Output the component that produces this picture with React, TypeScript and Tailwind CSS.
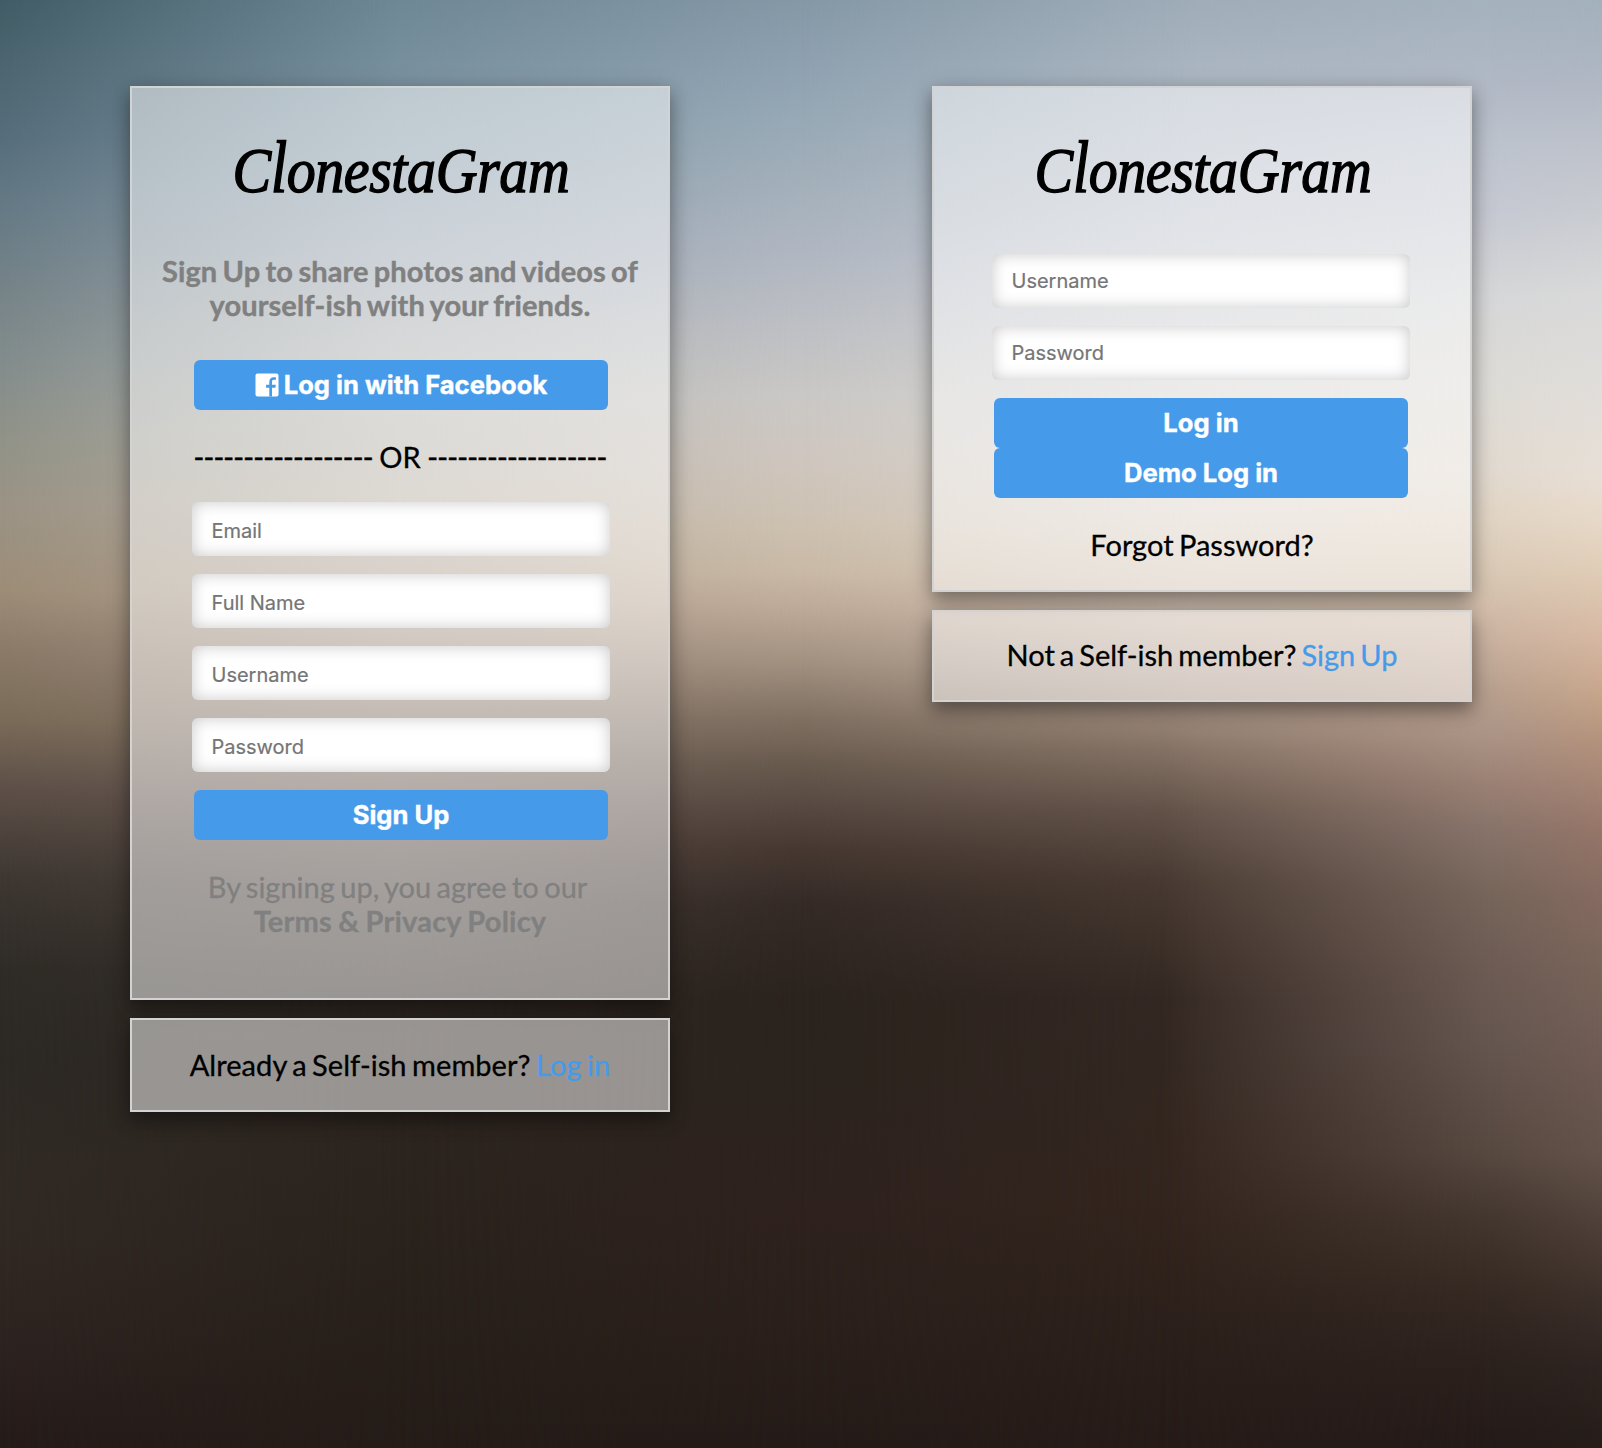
import type { ReactNode } from 'react';

function Backdrop() {
  return (
    <div className="absolute inset-0">
      <div className="absolute inset-0 bg-[linear-gradient(to_bottom,#415c66_0px,#4c6570_65px,#566e7b_138px,#647985_203px,#738288_277px,#848d8c_369px,#929388_443px,#9b9385_508px,#9d8d77_591px,#8d7b6a_646px,#7a6b58_720px,#5f5149_785px,#3e3732_877px,#2f2c27_970px,#2c2924_1062px,#302a25_1154px,#312823_1247px,#2d2320_1339px,#251b19_1448px)]" />
      <div className="absolute inset-0 bg-[linear-gradient(to_bottom,#6f8896_0px,#7b93a1_90px,#8b9dac_180px,#99a5b1_250px,#abafb2_330px,#b7b7b3_400px,#bab1a5_500px,#b09f90_600px,#8e7b6d_700px,#62534b_800px,#443a34_900px,#2f2722_1000px,#2b231d_1200px,#251c18_1448px)] [mask-image:linear-gradient(to_right,transparent_0px,black_400px)]" />
      <div className="absolute inset-0 bg-[linear-gradient(to_bottom,#8598a6_0px,#8fa1b0_65px,#97a9b6_120px,#a3b0ba_185px,#afb6c1_249px,#bdbfc4_323px,#cac8c5_397px,#cfc6be_462px,#cdc1b1_526px,#c9b9a5_572px,#bda997_610px,#a08f7f_665px,#7f6f61_720px,#67594d_766px,#594a43_803px,#463831_850px,#342a26_905px,#2b231d_997px,#2c231e_1108px,#2f221e_1200px,#2b201b_1320px,#241b18_1448px)] [mask-image:linear-gradient(to_right,transparent_400px,black_800px)]" />
      <div className="absolute inset-0 bg-[linear-gradient(to_bottom,#9fadb9_0px,#adb8c3_90px,#bbc1cc_180px,#c5c9d2_250px,#d3d3d5_340px,#dddad5_440px,#dfd5ca_520px,#d5c4b6_590px,#c1afa1_640px,#a79385_700px,#857365_750px,#635349_810px,#493b33_880px,#342823_1000px,#33251e_1200px,#261b18_1448px)] [mask-image:linear-gradient(to_right,transparent_800px,black_1200px)]" />
      <div className="absolute inset-0 bg-[linear-gradient(to_bottom,#a4b2bd_0px,#b0b8c4_80px,#bcc2cd_138px,#c6c9d2_212px,#d6d7d8_295px,#dedcd7_388px,#e2dad0_471px,#e1d4c3_520px,#dac9b5_572px,#cbb3a1_637px,#b8a08f_692px,#aa9285_739px,#9a8074_785px,#87736a_831px,#76655a_896px,#6d5b54_970px,#655650_1043px,#574840_1154px,#43372f_1219px,#362923_1293px,#2b211d_1366px,#241a18_1448px)] [mask-image:linear-gradient(to_right,transparent_1160px,black_1490px)]" />
      <div className="absolute inset-0 bg-[linear-gradient(to_bottom,#a3b1bc_0px,#adb5c2_65px,#bcc1ca_138px,#c9cbd1_212px,#d9d9d9_295px,#e0ddd9_388px,#e7dfd6_471px,#e7d9c9_517px,#dfccb6_572px,#d6b8a2_637px,#c7a68b_692px,#b4937c_739px,#a48474_785px,#957568_831px,#856a60_896px,#786459_970px,#705c54_1043px,#63524a_1154px,#50423a_1219px,#3d302a_1293px,#2e2421_1366px,#251d19_1448px)] [mask-image:linear-gradient(to_right,transparent_1490px,black_1602px)]" />
    </div>
  );
}

function Card({ className, children }: { className: string; children: ReactNode }) {
  return (
    <section
      className={`flex w-[540px] flex-col items-center border-2 border-[#d3d3d3] bg-white/51 text-center shadow-[0_8px_16px_rgba(0,0,0,0.3),0_6px_24px_rgba(0,0,0,0.2)] ${className}`}
    >
      {children}
    </section>
  );
}

function Title() {
  return (
    <h1 className="ml-[2px] flex h-[74px] w-[334px] origin-center scale-x-[0.905] justify-center font-['Apple_Chancery','Liberation_Serif',serif] text-[64px] leading-[74px] tracking-[-0.4px] whitespace-nowrap italic [-webkit-text-stroke:1.4px_black]">
      C<span className="inline-block origin-[50%_59px] scale-y-[1.17]">l</span>onestaGram
    </h1>
  );
}

function Field({ label, type = 'text', className }: { label: string; type?: string; className: string }) {
  return (
    <input
      type={type}
      placeholder={label}
      className={`block h-[54px] w-[418px] rounded-[6px] bg-white px-[19.5px] font-['Inter',sans-serif] text-[20px] tracking-[0px] shadow-[inset_0_0_16px_rgba(0,0,0,0.22)] outline-none [-webkit-text-stroke:0.2px_#757575] placeholder:text-[#757575] ${className}`}
    />
  );
}

function Button({ children }: { children: ReactNode }) {
  return (
    <button className="flex h-[50px] w-[414px] items-center justify-center rounded-[6px] bg-[#459bea] font-['Inter',sans-serif] text-[25.6px] font-bold text-white [-webkit-text-stroke:0.4px_white] [word-spacing:0px]">
      {children}
    </button>
  );
}

function FacebookIcon() {
  return (
    <svg viewBox="0 0 24 24" className="mr-[5px] size-6" fill="none">
      <rect x="0.5" y="0.5" width="23" height="23" rx="2" fill="white" />
      <path
        d="M14.3 23.6v-8.9h-3.2v-2.9h3.2V8.9c0-2.9 1.7-4.6 4.4-4.6h2.2v2.5h-1.8c-1.6 0-2.1.8-2.1 2.2v2.8h3.8l-.4 2.9H17v8.9z"
        fill="#459bea"
      />
    </svg>
  );
}

function Dashes() {
  return <span className="tracking-[-0.82px] [-webkit-text-stroke:0.5px_black]">------------------</span>;
}

export default function App() {
  return (
    <div className="relative h-[1448px] w-[1602px] overflow-hidden font-['Lato',sans-serif] text-[29px] leading-[34px] text-black [-webkit-text-stroke:0.3px_currentColor] [word-spacing:-2px]">
      <Backdrop />
      <main className="relative flex items-start justify-between pt-[86px] pr-[130px] pl-[130px]">
        <div className="flex flex-col gap-[18px]">
          <Card className="h-[914px] pt-[46px]">
            <Title />
            <p className="mt-[46px] font-bold whitespace-nowrap text-[#808080] [-webkit-text-stroke:0.4px_#808080] [word-spacing:-1.8px] tracking-[0.08px]">
              Sign Up to share photos and videos of
              <br />
              yourself-ish with your friends.
            </p>
            <div className="mt-[38px] ml-[2px]">
              <Button>
                <FacebookIcon />
                Log in with Facebook
              </Button>
            </div>
            <p className="mt-[30px] whitespace-nowrap [word-spacing:-0.8px]">
              <Dashes /> OR <Dashes />
            </p>
            <form className="mt-[28px] ml-[2px] flex flex-col items-center gap-[18px]">
              <Field label="Email" className="pt-[4px]" />
              <Field label="Full Name" className="pt-[4px]" />
              <Field label="Username" className="pt-[4px]" />
              <Field label="Password" type="password" className="pt-[4px]" />
              <Button>Sign Up</Button>
            </form>
            <p className="mt-[30px] whitespace-nowrap text-[#808080] [-webkit-text-stroke:0.3px_#808080]">
              By signing up, you agree to our&nbsp;
              <br />
              <b className="tracking-[0.2px] [word-spacing:-1px]">Terms &amp; Privacy Policy</b>
            </p>
          </Card>
          <Card className="h-[94px] pt-[28px]">
            <p className="tracking-[0.06px] whitespace-nowrap">
              Already a Self-ish member?{' '}
              <a className="text-[#459bea] [-webkit-text-stroke:0.3px_#459bea]">Log in</a>
            </p>
          </Card>
        </div>
        <div className="flex flex-col gap-[18px]">
          <Card className="h-[506px] pt-[46px]">
            <Title />
            <form className="mt-[46px] mr-[2px] flex flex-col items-center gap-[18px]">
              <Field label="Username" className="pb-[1px]" />
              <Field label="Password" type="password" className="pb-[1px]" />
              <div>
                <Button>Log in</Button>
                <Button>Demo Log in</Button>
              </div>
            </form>
            <p className="mt-[30px]">Forgot Password?</p>
          </Card>
          <Card className="h-[92px] pt-[26px]">
            <p className="whitespace-nowrap [word-spacing:-2.4px]">
              Not a Self-ish member?{' '}
              <a className="text-[#459bea] [-webkit-text-stroke:0.3px_#459bea]">Sign Up</a>
            </p>
          </Card>
        </div>
      </main>
    </div>
  );
}
